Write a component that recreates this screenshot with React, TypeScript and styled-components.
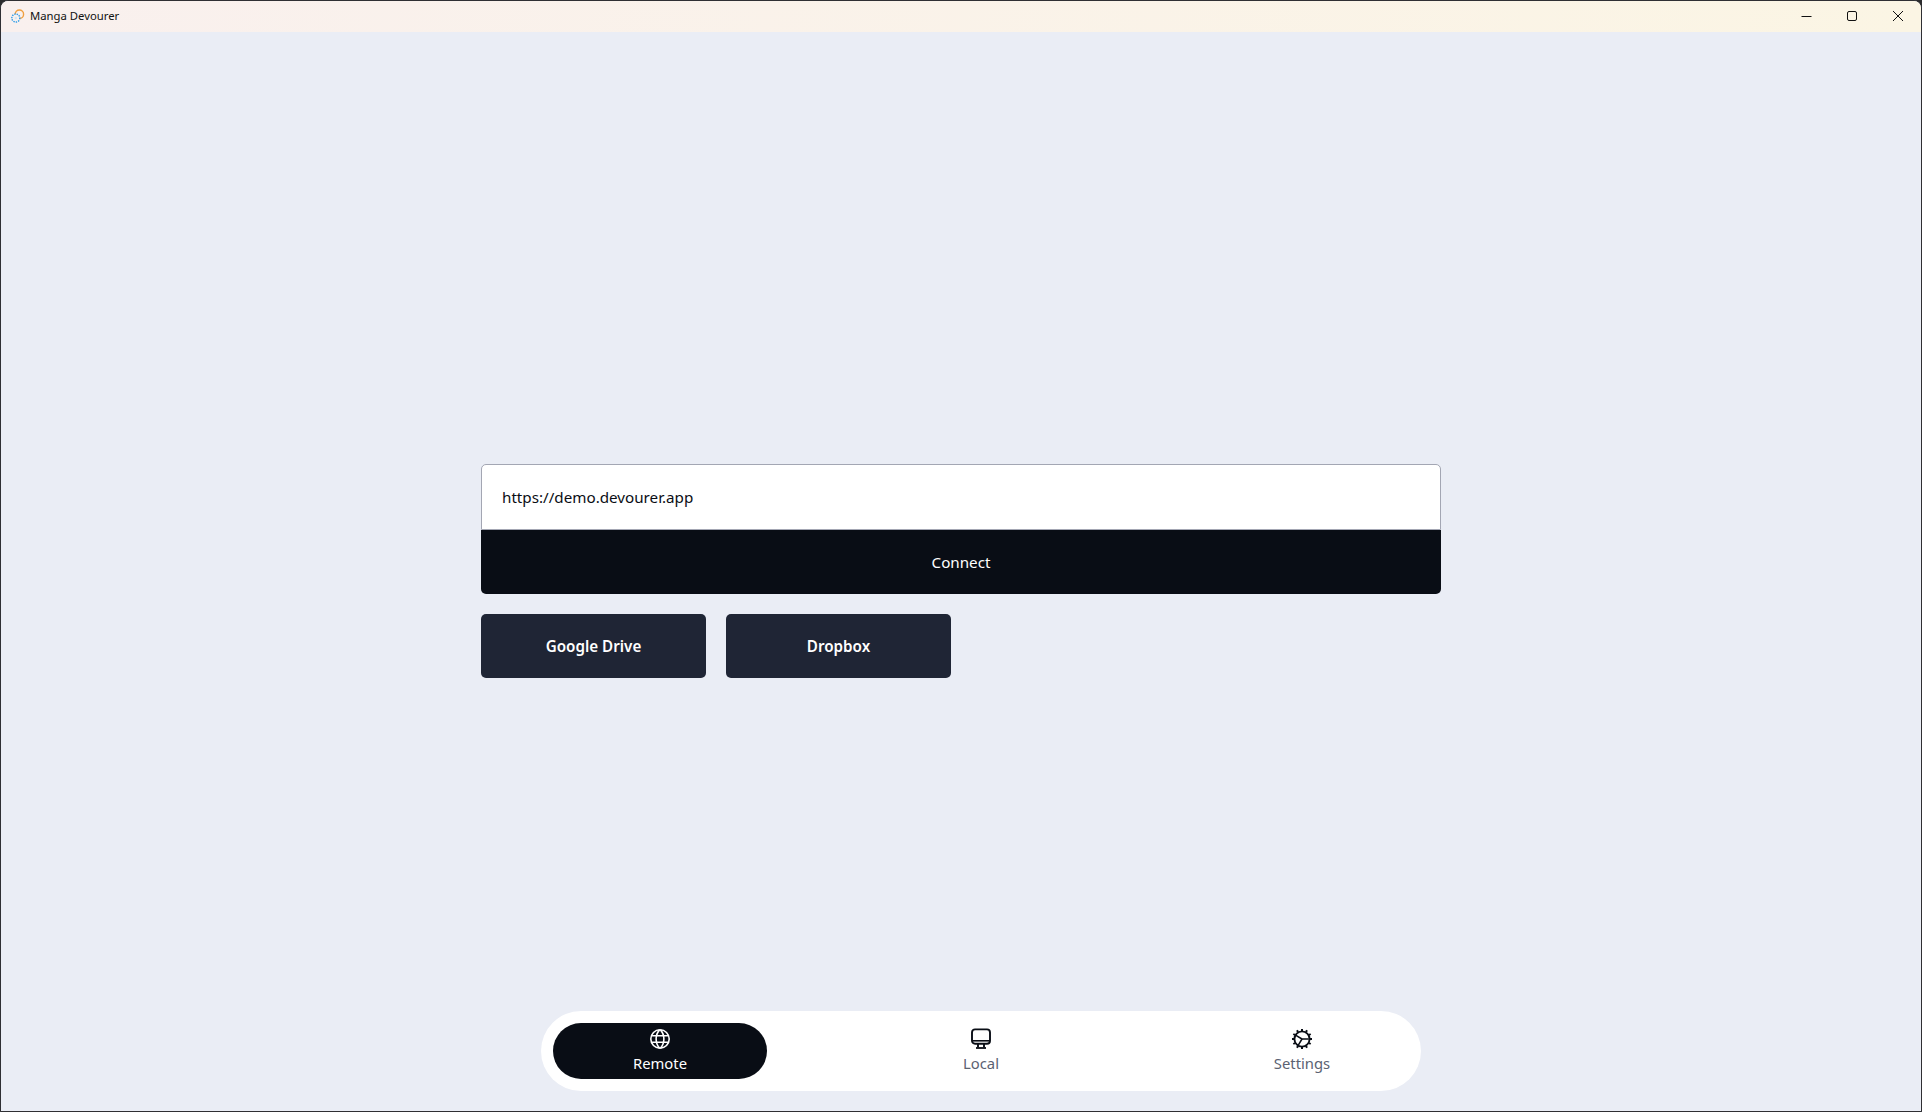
import React from "react";
import styled, { createGlobalStyle } from "styled-components";

const Global = createGlobalStyle`
  html, body { margin: 0; padding: 0; height: 100%; background: #2b2b2d; }
  #root { height: 100%; }
  * { box-sizing: border-box; }
`;
const Win = styled.div`
  position: relative;
  width: 1922px; height: 1112px;
  display: flex; flex-direction: column;
  border: 1px solid #2f2f33; border-radius: 8px 8px 0 0;
  overflow: hidden;
  background: #eaedf5;
  font-family: "Noto Sans", sans-serif;
`;
const TitleBar = styled.header`
  height: 31px; flex: none;
  display: flex; align-items: center;
  padding: 0 0 2px 10px;
  background: linear-gradient(90deg, #f9f0ee, #fbf5e4);
`;
const AppName = styled.span`
  margin-left: 5px; font-size: 11.3px; color: #111; line-height: 16px;
`;
const WinControls = styled.div`
  margin-left: auto; display: flex; height: 100%;
`;
const WinButton = styled.div`
  width: 45.5px; display: flex; align-items: center; justify-content: center; color: #111;
`;
const Main = styled.main`
  flex: 1; display: flex; align-items: center; justify-content: center;
  padding-bottom: 2px;
`;
const Form = styled.section`
  width: 960px; display: flex; flex-direction: column; gap: 20px;
`;
const Connect = styled.div`display: flex; flex-direction: column;`;
const UrlField = styled.div`
  height: 66px; padding: 0 20px;
  display: flex; align-items: center;
  background: #fff; border: 1px solid #a3a6b3; border-radius: 5px 5px 0 0;
  font-size: 15.2px; color: #0a0d14;
`;
const ConnectButton = styled.div`
  height: 64px; display: flex; align-items: center; justify-content: center;
  background: #090d15; color: #fff; border-radius: 0 0 5px 5px; font-size: 15.2px;
`;
const Providers = styled.div`display: flex; gap: 20px;`;
const Provider = styled.div`
  width: 225px; height: 64px; display: flex; align-items: center; justify-content: center;
  background: #1f2535; color: #fff; border-radius: 5px; font-size: 15.2px; font-weight: 600;
`;
const Nav = styled.nav`
  position: absolute; left: 540px; bottom: 20px;
  width: 880px; height: 80px; padding: 12px;
  display: flex; justify-content: space-between;
  background: #fff; border-radius: 40px;
`;
const NavItem = styled.div<{ $active?: boolean }>`
  width: 214px; height: 56px; border-radius: 28px;
  display: flex; flex-direction: column; align-items: center;
  padding-top: 5px;
  background: ${p => (p.$active ? "#090d15" : "transparent")};
  color: ${p => (p.$active ? "#fff" : "#090d15")};
`;
const NavLabel = styled.span<{ $active?: boolean }>`
  font-size: 14.8px; line-height: 20px; margin-top: 3px;
  color: ${p => (p.$active ? "#fff" : "#5b6272")};
`;

const Globe = () => (
  <svg width="22" height="22" viewBox="0 0 22 22" fill="none" stroke="currentColor" strokeWidth="1.6">
    <circle cx="11" cy="11" r="9.2" />
    <path d="M2.6 7.8h16.8M2.6 14.2h16.8" />
    <path d="M10.5 1.9C6 7 6 15 10.5 20.1M11.5 1.9C16 7 16 15 11.5 20.1" />
  </svg>
);
const Monitor = () => (
  <svg width="22" height="22" viewBox="0 0 22 22" fill="none" stroke="currentColor" strokeWidth="1.9">
    <rect x="2" y="1.4" width="18" height="14.4" rx="3" />
    <path d="M2 12.8h18" strokeWidth="1.6" />
    <path d="M8 16v3.4M14 16v3.4" />
    <path d="M6 20h10" strokeWidth="1.8" />
  </svg>
);
const teeth = Array.from({ length: 12 }, (_, i) => i * 30);
const Gear = () => (
  <svg width="22" height="22" viewBox="0 0 22 22" fill="none" stroke="currentColor" strokeWidth="1.9">
    <circle cx="11" cy="11" r="7.6" />
    <path d="M11 11L4.5 7.2M11 11L17.8 11M11 11L7 17.6" strokeWidth="1.5" />
    {teeth.map(a => (
      <path key={a} d="M11 1v2" strokeWidth="2" transform={`rotate(${a} 11 11)`} />
    ))}
  </svg>
);
const Logo = () => (
  <svg width="14" height="14" viewBox="0 0 14 14" fill="none" strokeWidth="1.4">
    <circle cx="8.4" cy="5.2" r="4.2" stroke="#f0a040" />
    <circle cx="4.8" cy="9" r="4" fill="#f8f1ee" stroke="#2c9be8" strokeDasharray="1.4 1" />
    <circle cx="4.8" cy="9" r="1.2" fill="#cfe6f7" />
  </svg>
);

export default function App() {
  return (
    <>
      <Global />
      <Win>
        <TitleBar>
          <Logo />
          <AppName>Manga Devourer</AppName>
          <WinControls>
            <WinButton>
              <svg width="12" height="12" viewBox="0 0 12 12" stroke="currentColor"><path d="M0.5 6.5h10" /></svg>
            </WinButton>
            <WinButton>
              <svg width="12" height="12" viewBox="0 0 12 12" fill="none" stroke="currentColor"><rect x="0.5" y="1.5" width="9" height="9" rx="1.5" /></svg>
            </WinButton>
            <WinButton>
              <svg width="12" height="12" viewBox="0 0 12 12" fill="none" stroke="currentColor"><path d="M1 1l10 10M11 1L1 11" /></svg>
            </WinButton>
          </WinControls>
        </TitleBar>
        <Main>
          <Form>
            <Connect>
              <UrlField>https://demo.devourer.app</UrlField>
              <ConnectButton>Connect</ConnectButton>
            </Connect>
            <Providers>
              <Provider>Google Drive</Provider>
              <Provider>Dropbox</Provider>
            </Providers>
          </Form>
        </Main>
        <Nav>
          <NavItem $active><Globe /><NavLabel $active>Remote</NavLabel></NavItem>
          <NavItem><Monitor /><NavLabel>Local</NavLabel></NavItem>
          <NavItem><Gear /><NavLabel>Settings</NavLabel></NavItem>
        </Nav>
      </Win>
    </>
  );
}
